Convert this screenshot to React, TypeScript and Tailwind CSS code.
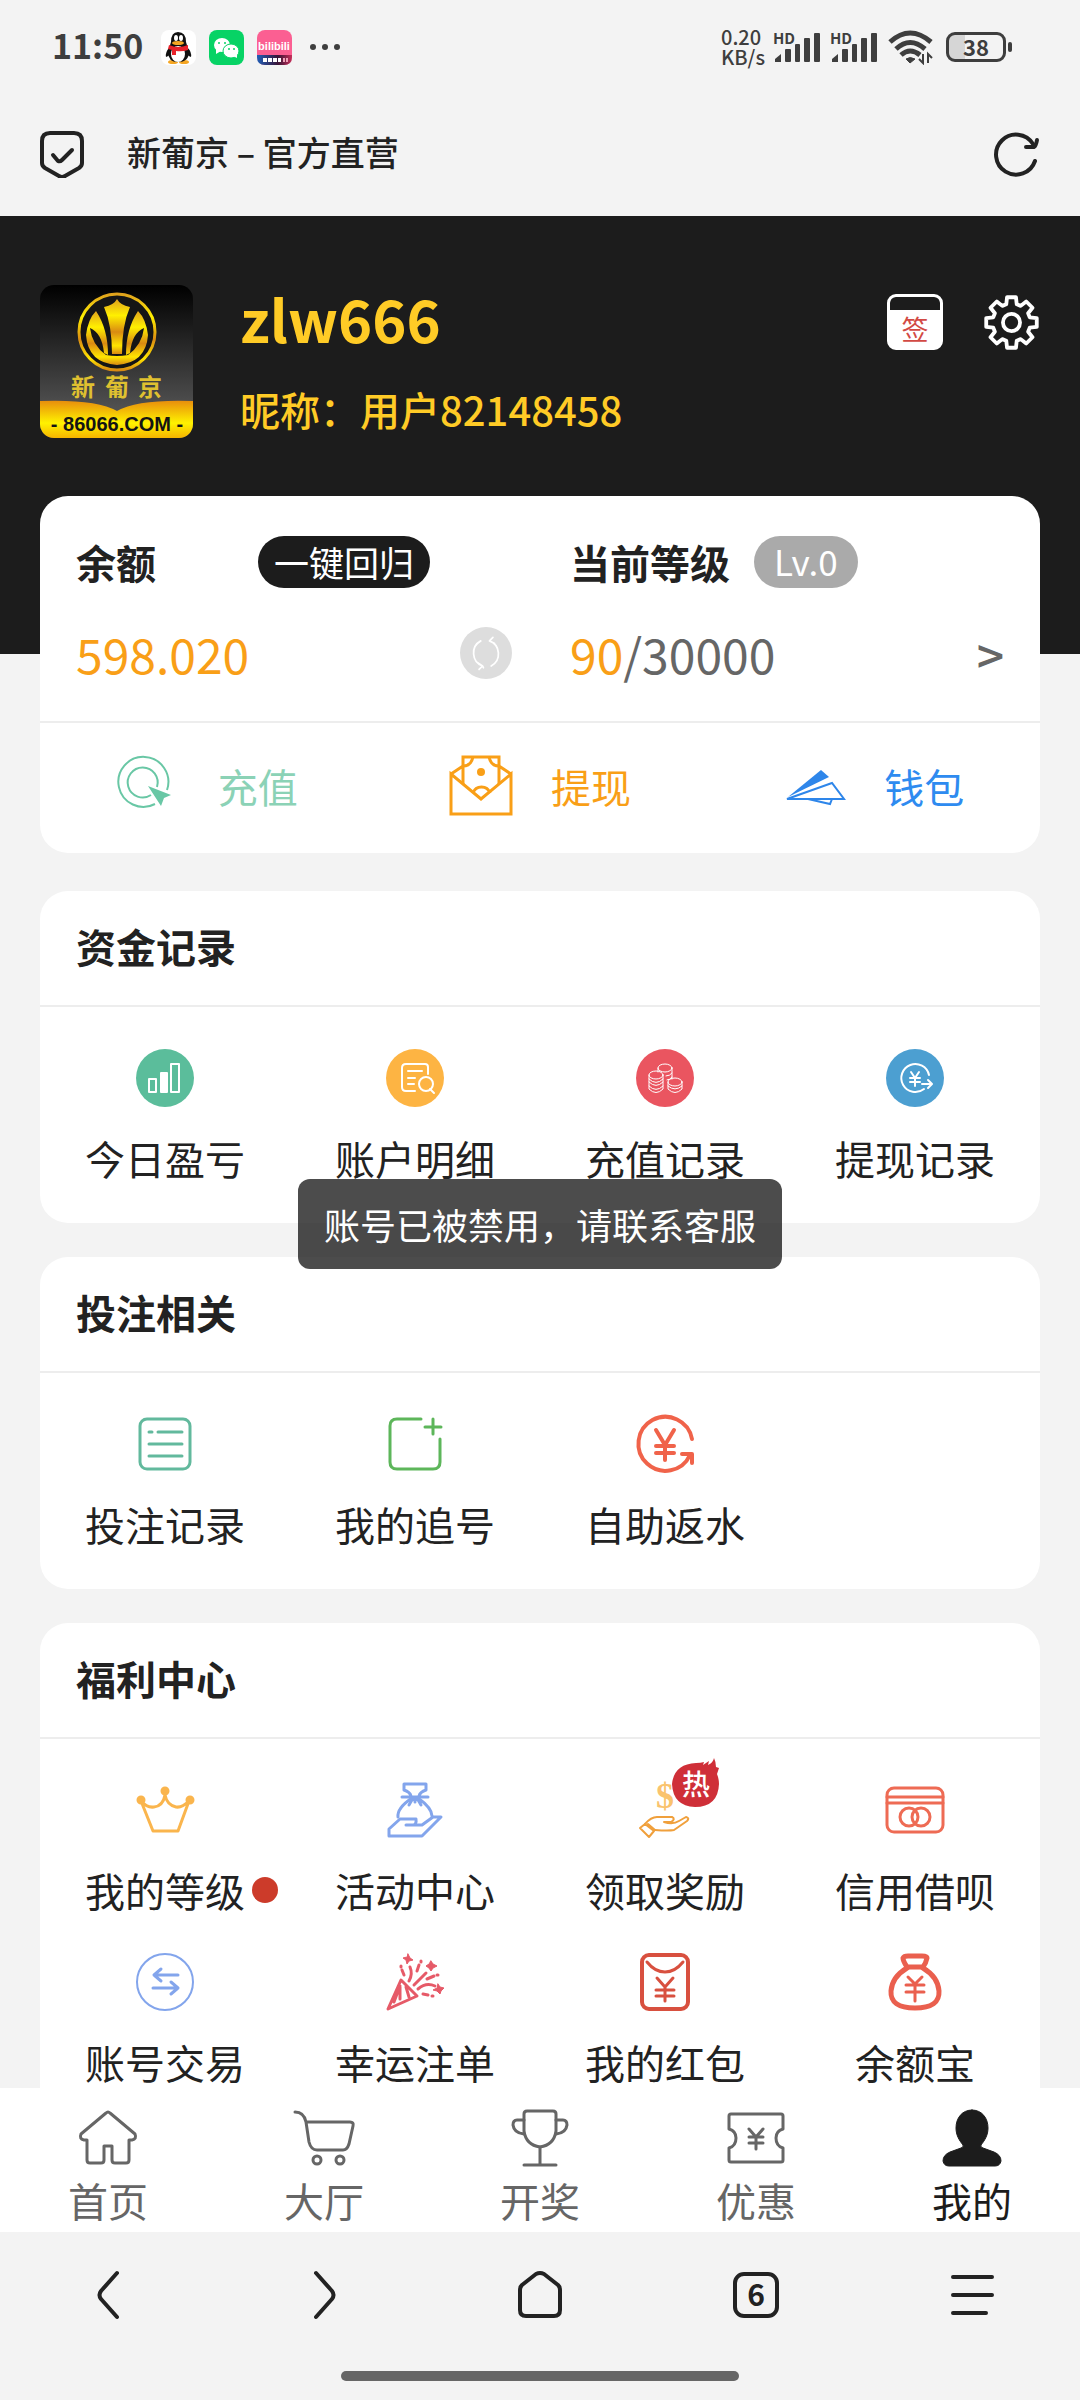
import type { ReactNode } from "react";

interface IconProps {
  children: ReactNode;
  color?: string;
  width?: number;
  className?: string;
}

interface MenuItem {
  label: string;
  icon: ReactNode;
  dot?: boolean;
  hot?: boolean;
}

interface MenuSection {
  title: string;
  items: MenuItem[];
}

// Every icon is drawn around (0, 0) on a 60 unit canvas
const Icon = ({ children, color = "#666666", width = 3, className = "size-[60px]" }: IconProps) => (
  <svg
    viewBox="-30 -30 60 60"
    className={`shrink-0 overflow-visible ${className}`}
    fill="none"
    stroke={color}
    strokeWidth={width}
    strokeLinecap="round"
    strokeLinejoin="round"
    aria-hidden="true"
  >
    {children}
  </svg>
);

const gearPoints = Array.from({ length: 8 })
  .flatMap((_, i) => {
    const corners = [
      [20, -16],
      [27, -10],
      [27, 10],
      [20, 16],
    ];
    return corners.map(([r, deg]) => {
      const a = ((i * 45 + deg) * Math.PI) / 180;
      return `${(r * Math.cos(a)).toFixed(1)},${(r * Math.sin(a)).toFixed(1)}`;
    });
  })
  .join(" ");

const sections: MenuSection[] = [
  {
    title: "资金记录",
    items: [
      {
        label: "今日盈亏",
        icon: (
          <Icon color="#ffffff" width={2}>
            <circle r="29" fill="#5bbd9b" stroke="none" />
            <rect x="-16" y="1" width="7" height="13" />
            <rect x="-4" y="-5" width="6" height="19" fill="#ffffff" />
            <rect x="6" y="-14" width="8" height="28" />
          </Icon>
        ),
      },
      {
        label: "账户明细",
        icon: (
          <Icon color="#ffffff" width={2}>
            <circle r="29" fill="#fdb443" stroke="none" />
            <path d="M13 -4 V-11 Q13 -14 10 -14 H-9 Q-13 -14 -13 -10 V9 Q-13 13 -9 13 H0" />
            <path d="M-7 -7 H7 M-7 0 H0 M-7 6 H-1" />
            <circle cx="11" cy="6" r="7" />
            <path d="M15 11 L19 15" />
          </Icon>
        ),
      },
      {
        label: "充值记录",
        icon: (
          <Icon color="#ffffff" width={1}>
            <circle r="29" fill="#ea5560" stroke="none" />
            <ellipse cx="0" cy="-10" rx="7" ry="4" />
            <path d="M-7 -10 V-6 M7 -10 V1 M1 -2 Q5 -2 7 -5 M2 2 Q5 2 7 -1" />
            <ellipse cx="-9" cy="-3" rx="7" ry="4" />
            <path d="M-16 -3 V11 Q-9 18 -2 11 V-3 M-16 1 Q-9 8 -2 1 M-16 4 Q-9 11 -2 4 M-16 8 Q-9 15 -2 8" />
            <ellipse cx="10" cy="4" rx="7" ry="4" />
            <path d="M3 4 V11 Q10 18 17 11 V4 M3 8 Q10 14 17 8" />
          </Icon>
        ),
      },
      {
        label: "提现记录",
        icon: (
          <Icon color="#ffffff" width={2}>
            <circle r="29" fill="#4c9fd1" stroke="none" />
            <path d="M14 -3 A14 14 0 1 0 9 11" />
            <path d="M-4 -6 L0 0 L4 -6 M-5 0 H5 M-5 4 H5 M0 0 V8" />
            <path d="M7 6 H16 M13 2 L17 6 L13 10" />
          </Icon>
        ),
      },
    ],
  },
  {
    title: "投注相关",
    items: [
      {
        label: "投注记录",
        icon: (
          <Icon color="#62b99d">
            <rect x="-25" y="-25" width="50" height="50" rx="7" />
            <path d="M-16 -12 H-13 M-7 -12 H17 M-16 0 H17 M-16 12 H17" />
          </Icon>
        ),
      },
      {
        label: "我的追号",
        icon: (
          <Icon color="#5db65a">
            <path d="M6 -25 H-18 Q-25 -25 -25 -18 V18 Q-25 25 -18 25 H18 Q25 25 25 18 V-5" />
            <path d="M18 -25 V-10 M10 -17 H26" />
          </Icon>
        ),
      },
      {
        label: "自助返水",
        icon: (
          <Icon color="#f0634a" width={4}>
            <path d="M27 -5 A27 27 0 1 0 25 11 M17 10 H27 V19" />
            <path d="M-9 -14 L0 1 L9 -14 M-9 2 H9 M-9 9 H9 M0 1 V16" />
          </Icon>
        ),
      },
    ],
  },
  {
    title: "福利中心",
    items: [
      {
        label: "我的等级",
        dot: true,
        icon: (
          <Icon color="#fab54d">
            <path d="M-24 -9 L-12 21 H13 L24 -9 Q17 -2 11 -3 Q2 -5 0 -15 Q-2 -4 -11 -3 Q-18 -2 -24 -9 Z" />
            <g fill="#fab54d">
              <circle cx="-24" cy="-10" r="3" />
              <circle cx="0" cy="-19" r="3" />
              <circle cx="25" cy="-10" r="3" />
            </g>
          </Icon>
        ),
      },
      {
        label: "活动中心",
        icon: (
          <Icon color="#83a5ec">
            <path d="M-4 -14 Q-5 -18 -11 -20 V-26 H11 V-20 Q5 -18 4 -14 M-13 -13 H13" />
            <path d="M-3 -12 Q-18 -2 -17 7 M3 -12 Q17 -2 17 6 M-2 -12 L-6 -5 M2 -12 L6 -5 M0 -12 V-8" />
            <path d="M-26 26 V19 L-15 9 H1 Q2 15 -3 15 H-9 H7 L18 7 H26 L7 26 Z" />
          </Icon>
        ),
      },
      {
        label: "领取奖励",
        hot: true,
        icon: (
          <Icon color="#f0a03c" width={2}>
            <text
              x="0"
              y="-2"
              fontSize="36"
              fontWeight="bold"
              textAnchor="middle"
              fill="#fac36e"
              stroke="none"
              className="font-['Liberation_Serif',serif]"
            >
              $
            </text>
            <path d="M-20 14 Q-14 7 -8 7 H7 Q11 9 6 12 L-1 12 Q8 15 14 11 L21 7 Q25 8 22 11 L9 20 Q4 21 -10 20" />
            <path d="M-20 14 L-25 18 L-16 27 L-11 21 Z M-17 14 L-10 20" />
          </Icon>
        ),
      },
      {
        label: "信用借呗",
        icon: (
          <Icon color="#ee6b54">
            <rect x="-28" y="-22" width="56" height="44" rx="7" />
            <path d="M-28 -13 H28 M-28 -7 H28" />
            <circle cx="-6" cy="7" r="9" />
            <circle cx="6" cy="7" r="9" />
          </Icon>
        ),
      },
      {
        label: "账号交易",
        icon: (
          <Icon color="#83a5ec">
            <circle r="28" strokeWidth="2" />
            <path d="M13 -7 H-11 M-4 -13 L-11 -7 L-4 -1 M-12 6 H13 M6 0 L13 6 L6 12" />
          </Icon>
        ),
      },
      {
        label: "幸运注单",
        icon: (
          <Icon color="#e65a68">
            <path d="M-27 27 L-14 -2 L2 14 Z M-15 5 V17 M-9 5 L-6 15 M-21 20 L-15 4" />
            <path d="M-6 -1 Q-2 -8 -5 -15 M-1 3 L11 -9 M3 7 Q11 0 20 4 M-11 -7 L-13 -12 M2 -11 L4 -17 M12 -3 L19 -6 M8 12 L13 13" />
            <path d="M-14 -15 V-16 M6 -20 V-21 M22 -7 H23 M17 14 H18" />
            <g fill="#e65a68" strokeWidth="1">
              <path d="M-7 -28 L-5 -24 L-2 -22 L-6 -21 L-8 -18 L-9 -22 L-12 -24 L-8 -25 Z" />
              <path d="M16 -21 L18 -18 L22 -16 L18 -14 L16 -11 L14 -14 L11 -16 L14 -18 Z" />
              <path d="M23 2 L25 5 L29 6 L26 9 L25 12 L22 9 L18 8 L22 6 Z" />
            </g>
          </Icon>
        ),
      },
      {
        label: "我的红包",
        icon: (
          <Icon color="#d8503f" width={4}>
            <rect x="-23" y="-27" width="46" height="54" rx="7" />
            <path d="M-18 -20 Q-10 -10 0 -10 Q10 -10 18 -20" strokeWidth="3" />
            <path d="M-8 -4 L0 5 L8 -4 M-9 8 H9 M-9 14 H9 M0 6 V19" strokeWidth="3" />
          </Icon>
        ),
      },
      {
        label: "余额宝",
        icon: (
          <Icon color="#ea5f4e" width={5}>
            <path d="M-8 -15 Q-12 -21 -12 -24 Q-11 -26 -7 -26 H7 Q12 -26 12 -24 Q11 -19 8 -15 Z" />
            <path d="M-8 -14 Q-23 -5 -24 9 Q-25 26 0 26 Q25 26 24 9 Q23 -5 8 -14" />
            <path d="M-7 -5 L0 2 L7 -5 M-9 3 H9 M-9 10 H9 M0 3 V19" strokeWidth="3" />
          </Icon>
        ),
      },
    ],
  },
];

const tabs = [
  {
    label: "首页",
    icon: (
      <Icon>
        <path d="M-2 -25 Q0 -27 2 -25 L27 -4 Q29 1 24 2 H21 V22 Q21 25 18 25 H7 Q4 25 4 22 V8 H-4 V22 Q-4 25 -7 25 H-18 Q-21 25 -21 22 V2 H-24 Q-29 1 -27 -4 Z" />
      </Icon>
    ),
  },
  {
    label: "大厅",
    icon: (
      <Icon>
        <path d="M-29 -26 Q-20 -26 -18 -16 H26 Q30 -16 29 -12 L25 6 Q23 12 19 12 H-7 Q-13 12 -15 4 L-18 -16" />
        <circle cx="-7" cy="22" r="4" />
        <circle cx="16" cy="22" r="4" />
      </Icon>
    ),
  },
  {
    label: "开奖",
    icon: (
      <Icon>
        <path d="M-13 -27 H13 Q16 -27 16 -24 V-7 Q14 7 0 9 Q-14 7 -16 -7 V-24 Q-16 -27 -13 -27 Z" />
        <path d="M-16 -18 H-23 Q-27 -18 -27 -13 Q-26 -5 -16 -4 M16 -18 H23 Q27 -18 27 -13 Q26 -5 16 -4 M0 9 V27 M-16 27 H16" />
      </Icon>
    ),
  },
  {
    label: "优惠",
    icon: (
      <Icon>
        <path d="M-25 -24 H25 Q27 -24 27 -22 V-9 Q20 -7 20 0 Q20 8 27 10 V22 Q27 24 25 24 H-25 Q-27 24 -27 22 V10 Q-20 8 -20 0 Q-20 -7 -27 -9 V-22 Q-27 -24 -25 -24 Z" />
        <path d="M-7 -9 L0 -1 L7 -9 M-7 -1 H7 M-7 5 H7 M0 -1 V11" />
      </Icon>
    ),
  },
  {
    label: "我的",
    active: true,
    icon: (
      <Icon color="#1c1c1c" width={1}>
        <path
          fill="#1c1c1c"
          d="M0 -28 C10 -28 16 -20 16 -10 C16 -3 13 2 9 7 Q8 9 11 10 L22 14 Q29 17 29 23 Q28 28 23 28 H-23 Q-28 28 -29 23 Q-29 17 -22 14 L-11 10 Q-8 9 -9 7 C-13 2 -16 -3 -16 -10 C-16 -20 -10 -28 0 -28 Z"
        />
      </Icon>
    ),
  },
];

const Signal = () => (
  <svg viewBox="0 0 48 32" className="h-8 w-12 overflow-visible" fill="#3e3e3e" aria-hidden="true">
    <text x="0" y="13" fontSize="15" fontWeight="bold" className="font-['Noto_Sans_CJK_SC',sans-serif]">
      HD
    </text>
    <path d="M2 28 L8 23 V31 H2 Z" />
    <rect x="12" y="18" width="6" height="13" rx="1" />
    <rect x="22" y="13" width="5" height="18" rx="1" />
    <rect x="31" y="7" width="6" height="24" rx="1" />
    <rect x="41" y="2" width="6" height="29" rx="1" />
  </svg>
);

const StatusBar = () => (
  <div className="flex h-[94px] items-center pl-[52px] pr-[68px] text-[#3e3e3e]">
    <span className="pb-1 text-[34px] font-bold leading-[40px]">11:50</span>
    <div className="ml-[18px] flex items-center gap-[13px]">
      {/* QQ */}
      <svg viewBox="0 0 35 35" className="size-[35px]" aria-hidden="true">
        <rect width="35" height="35" rx="8" fill="#ffffff" />
        <ellipse cx="12" cy="32" rx="5" ry="2" fill="#f5a623" />
        <ellipse cx="23" cy="32" rx="5" ry="2" fill="#f5a623" />
        <path d="M9 17 Q4 22 5 27 Q7 27 9 24 M26 17 Q31 22 30 27 Q28 27 26 24" fill="#111111" />
        <path d="M17 2 Q25 2 25 12 L28 22 Q28 32 17 32 Q7 32 7 22 L10 12 Q10 2 17 2" fill="#111111" />
        <ellipse cx="17" cy="24" rx="7" ry="8" fill="#ffffff" />
        <path d="M8 15 Q17 19 27 15 L27 20 Q21 22 15 21 V25 H11 V20 L7 19 Z" fill="#e8222a" />
        <ellipse cx="15" cy="8" rx="2" ry="3" fill="#ffffff" />
        <ellipse cx="20" cy="8" rx="2" ry="3" fill="#ffffff" />
        <ellipse cx="17" cy="13" rx="6" ry="2" fill="#f5a623" />
      </svg>
      {/* WeChat */}
      <svg viewBox="0 0 35 35" className="size-[35px]" aria-hidden="true">
        <rect width="35" height="35" rx="8" fill="#07d365" />
        <ellipse cx="13" cy="15" rx="8" ry="7" fill="#ffffff" />
        <path d="M7 19 L7 24 L12 21 Z" fill="#ffffff" />
        <ellipse cx="22" cy="21" rx="8" ry="7" fill="#ffffff" stroke="#07d365" />
        <path d="M24 26 L28 28 L28 24 Z" fill="#ffffff" />
        <g fill="#07d365">
          <circle cx="10" cy="13" r="1" />
          <circle cx="16" cy="13" r="1" />
          <circle cx="20" cy="19" r="1" />
          <circle cx="25" cy="19" r="1" />
        </g>
      </svg>
      {/* bilibili */}
      <svg viewBox="0 0 35 35" className="size-[35px]" aria-hidden="true">
        <defs>
          <linearGradient id="bili">
            <stop offset="0" stopColor="#1f5fb8" />
            <stop offset="0.6" stopColor="#3a1436" />
            <stop offset="1" stopColor="#c6305a" />
          </linearGradient>
        </defs>
        <rect width="35" height="35" rx="8" fill="#fb5f92" />
        <path d="M0 25 H35 V27 Q35 35 27 35 H8 Q0 35 0 27 Z" fill="url(#bili)" />
        <text
          x="17"
          y="20"
          fontSize="11"
          fontWeight="bold"
          textAnchor="middle"
          fill="#ffffff"
          className="font-['Liberation_Sans',sans-serif]"
        >
          bilibili
        </text>
        <path d="M6 30 H24" stroke="#ffffff" strokeWidth="4" strokeDasharray="4 1" />
        <path d="M26 30 H31" stroke="#f0a0b8" strokeWidth="4" strokeDasharray="2 1" />
      </svg>
      <svg viewBox="0 0 34 8" className="ml-1 h-2 w-[34px]" fill="#3e3e3e" aria-hidden="true">
        <circle cx="4" cy="4" r="3" />
        <circle cx="16" cy="4" r="3" />
        <circle cx="28" cy="4" r="3" />
      </svg>
    </div>
    <div className="ml-auto flex items-center">
      <div className="w-[52px] text-[20px] font-medium leading-[20px]">
        <div>0.20</div>
        <div>KB/s</div>
      </div>
      <Signal />
      <div className="ml-[9px]">
        <Signal />
      </div>
      <svg
        viewBox="0 0 46 36"
        className="ml-[10px] h-9 w-[46px]"
        fill="none"
        stroke="#3e3e3e"
        strokeWidth="5"
        aria-hidden="true"
      >
        <path d="M2 13 Q22 -5 43 13 M8 20 Q22 7 37 20 M13 26 Q22 18 32 26" />
        <path d="M18 30 Q22 27 27 30 L22 34 Z" fill="#3e3e3e" strokeWidth="1" />
        <path d="M35 25 V34 L31 30 M40 34 V25 L44 29" strokeWidth="2" />
      </svg>
      <div className="ml-3 flex h-[30px] w-[60px] items-center justify-center rounded-[9px] border-[3px] border-[#3e3e3e] bg-linear-to-r from-[#d6d6d6] from-30% to-transparent to-30% pb-[2px] text-[22px] font-bold leading-none">
        38
      </div>
      <div className="ml-[2px] h-[10px] w-[4px] rounded-full bg-[#3e3e3e]" />
    </div>
  </div>
);

const TitleBar = () => (
  <div className="flex h-[122px] items-center px-10 pb-[3px]">
    <svg
      viewBox="0 0 44 48"
      className="h-12 w-11"
      fill="none"
      stroke="#222222"
      strokeWidth="4"
      strokeLinecap="round"
      strokeLinejoin="round"
      aria-hidden="true"
    >
      <path d="M10 3 H34 Q42 3 42 11 V33 Q42 36 39 38 L25 46 Q22 48 19 46 L5 38 Q2 36 2 33 V11 Q2 3 10 3 Z" />
      <path d="M13 25 L18 31 Q20 32 22 30 L32 20" />
    </svg>
    <h1 className="ml-[43px] pb-1 text-[34px] font-medium leading-[48px] text-[#222222]">新葡京 – 官方直营</h1>
    <button type="button" aria-label="刷新页面" className="ml-auto">
      <svg
        viewBox="0 0 46 46"
        className="size-[46px]"
        fill="none"
        stroke="#222222"
        strokeWidth="4"
        strokeLinecap="round"
        strokeLinejoin="round"
      >
        <path d="M41 30 A20 20 0 1 1 39 13" />
        <path d="M32 16 H40 Q42 15 43 9" />
      </svg>
    </button>
  </div>
);

const Logo = () => (
  <svg viewBox="0 0 153 153" className="size-[153px] shrink-0 rounded-[14px]" role="img" aria-label="新葡京">
    <defs>
      <linearGradient id="logo-bg" x1="0" y1="0" x2="0" y2="1">
        <stop offset="0" stopColor="#000000" />
        <stop offset="0.8" stopColor="#505050" />
      </linearGradient>
      <linearGradient id="logo-gold" x1="0" y1="0" x2="0" y2="1">
        <stop offset="0" stopColor="#e0a21c" />
        <stop offset="0.3" stopColor="#fff000" />
        <stop offset="0.6" stopColor="#d98a12" />
        <stop offset="0.85" stopColor="#ffe600" />
        <stop offset="1" stopColor="#d98a12" />
      </linearGradient>
      <linearGradient id="logo-band" x1="0" y1="0" x2="0" y2="1">
        <stop offset="0" stopColor="#e88e0c" />
        <stop offset="0.6" stopColor="#fff200" />
        <stop offset="1" stopColor="#f5b400" />
      </linearGradient>
    </defs>
    <rect width="153" height="153" fill="url(#logo-bg)" />
    <circle cx="77" cy="47" r="38" fill="#151515" stroke="url(#logo-gold)" strokeWidth="3" />
    <g fill="url(#logo-gold)">
      <path d="M77 14 Q80 20 90 22 Q82 40 82 69 H72 Q72 40 64 22 Q74 20 77 14 Z" />
      <path d="M56 26 Q68 44 68 70 L64 68 Q62 48 50 43 Q52 60 66 70 Q77 72 88 70 Q102 60 104 43 Q92 48 90 68 L86 70 Q86 44 98 26 Q106 34 108 50 Q106 78 77 80 Q48 78 46 50 Q48 34 56 26 Z" />
    </g>
    <text
      x="31 65 98"
      y="111"
      fontSize="24"
      fontWeight="bold"
      fill="#dfc030"
      className="font-['Noto_Sans_CJK_SC',sans-serif]"
    >
      新葡京
    </text>
    <path d="M0 116 Q56 114 77 126 Q98 114 153 116 V153 H0 Z" fill="url(#logo-band)" />
    <text
      x="77"
      y="146"
      fontSize="20"
      fontWeight="bold"
      textAnchor="middle"
      fill="#141414"
      className="font-['Liberation_Sans',sans-serif]"
    >
      - 86066.COM -
    </text>
  </svg>
);

const ProfileHeader = () => (
  <header className="flex bg-[#1c1c1c] px-10 pb-[216px] pt-[69px]">
    <Logo />
    <div className="ml-[47px] text-[#ffcb26]">
      <div className="text-[58px] font-bold leading-[66px]">zlw666</div>
      <div className="mt-[29px] text-[40px] font-medium leading-[58px]">昵称：用户82148458</div>
    </div>
    <div className="ml-auto flex items-start gap-10 pt-[9px]">
      <button type="button" aria-label="签到">
        <span className="block size-[56px] overflow-hidden rounded-[9px] border-[3px] border-white bg-white">
          <span className="block h-[13px] rounded-t-[5px] bg-[#1c1c1c]" />
          <span className="block text-center text-[27px] leading-[37px] text-[#d24a44]">签</span>
        </span>
      </button>
      <button type="button" aria-label="设置">
        <Icon color="#ffffff" width={4} className="size-[57px]">
          <polygon points={gearPoints} />
          <circle r="9" />
        </Icon>
      </button>
    </div>
  </header>
);

const BalanceCard = () => (
  <section className="rounded-[28px] bg-white">
    <div className="grid grid-cols-2 px-9 pb-[38px] pt-10">
      <div className="pr-7">
        <div className="flex h-[52px] items-center">
          <h2 className="text-[40px] font-bold leading-[52px]">余额</h2>
          <button
            type="button"
            className="ml-[102px] h-[52px] rounded-full bg-[#1c1c1c] px-4 text-[35px] leading-[50px] text-white"
          >
            一键回归
          </button>
        </div>
        <div className="mt-[35px] flex h-[60px] items-center justify-between">
          <span className="text-[48px] leading-[60px] text-[#f99f17]">598.020</span>
          <button
            type="button"
            aria-label="刷新余额"
            className="flex size-[52px] items-center justify-center rounded-full bg-[#dddddd]"
          >
            <Icon color="#ffffff" width={2} className="size-[52px]">
              <path d="M-6 -14 A16 16 0 0 0 -4 15 M-3 17 L-4 15 L-10 11 M-4 15 L-8 19" />
              <path d="M6 15 A16 16 0 0 0 4 -14 L10 -11 M4 -14 L8 -18" />
            </Icon>
          </button>
        </div>
      </div>
      <div className="pl-[30px]">
        <div className="flex h-[52px] items-center">
          <h2 className="text-[40px] font-bold leading-[52px]">当前等级</h2>
          <span className="ml-6 h-[52px] rounded-full bg-[#aaaaaa] px-5 text-[35px] leading-[50px] text-white">
            Lv.0
          </span>
        </div>
        <a href="#level" className="mt-[35px] flex h-[60px] items-center justify-between text-[48px] leading-[60px]">
          <span className="text-[#666666]">
            <span className="text-[#f99f17]">90</span>/30000
          </span>
          <span className="font-medium text-[#666666]">&gt;</span>
        </a>
      </div>
    </div>
    <div className="grid h-[132px] grid-cols-3 border-t-2 border-[#ededed] pb-1 text-[40px] leading-[60px]">
      <a href="#recharge" className="flex items-center justify-center gap-[38px] text-[#8bd2b6]">
        <svg viewBox="0 0 64 64" className="size-16" fill="none" stroke="#69c7a5" strokeWidth="2" aria-hidden="true">
          <path d="M51 36 A25 25 0 1 0 39 50" />
          <path d="M41 33 A15 15 0 1 0 35 41" />
          <path d="M32 32 L55 41 L48 44 L45 52 Z" fill="#69c7a5" stroke="none" />
        </svg>
        充值
      </a>
      <a href="#withdraw" className="flex items-center justify-center gap-[38px] text-[#f99f17]">
        <svg viewBox="0 0 64 64" className="size-16" fill="none" stroke="#f99f17" strokeWidth="3" aria-hidden="true">
          <path d="M2 20 V60 H62 V20 L32 45 Z" />
          <path d="M2 20 L14 12 M62 20 L50 12 M14 30 V3 H50 V30" />
          <path d="M14 12 Q22 12 24 3 M50 12 Q42 12 40 3 M24 39 A9 9 0 0 1 41 39" />
          <circle cx="32" cy="18" r="4" fill="#f99f17" stroke="none" />
        </svg>
        提现
      </a>
      <a href="#wallet" className="flex items-center justify-center gap-[38px] text-[#2e8bf0]">
        <svg viewBox="0 0 64 64" className="size-16" fill="none" stroke="#2e86ea" strokeWidth="2" aria-hidden="true">
          <path d="M39 16 L47 23 L6 43 Z" fill="#2e86ea" stroke="none" />
          <path d="M5 45 L50 29 L62 45 Z M26 45 L48 50 L50 45" />
        </svg>
        钱包
      </a>
    </div>
  </section>
);

const HotBadge = () => (
  <svg viewBox="0 0 48 50" className="absolute -top-[22px] left-[37px] h-[50px] w-12" aria-hidden="true">
    <path
      d="M24 5 Q29 5 32 4 L31 7 L37 3 L36 7 Q41 5 42 0 Q44 4 44 9 L47 10 L45 16 Q47 21 47 26 Q46 49 23 49 Q1 48 0 26 Q2 6 24 5 Z"
      fill="#cf2f38"
    />
    <text
      x="24"
      y="37"
      fontSize="28"
      fontWeight="500"
      textAnchor="middle"
      fill="#ffffff"
      className="font-['Noto_Sans_CJK_SC',sans-serif]"
    >
      热
    </text>
  </svg>
);

const SectionCard = ({ title, items }: MenuSection) => (
  <section className="rounded-[28px] bg-white">
    <h2 className="border-b-2 border-[#ededed] px-9 pb-[29px] pt-[25px] text-[40px] font-bold leading-[60px]">
      {title}
    </h2>
    <div className="grid grid-cols-4 gap-y-8 pb-[35px] pt-[41px]">
      {items.map((item) => (
        <a key={item.label} href={`#${item.label}`} className="flex flex-col items-center">
          <span className="relative">
            {item.icon}
            {item.hot && <HotBadge />}
          </span>
          <span className="relative mt-5 text-[40px] leading-[60px]">
            {item.label}
            {item.dot && <span className="absolute left-full top-[17px] ml-[7px] size-[26px] rounded-full bg-[#cc3b2a]" />}
          </span>
        </a>
      ))}
    </div>
  </section>
);

const TabBar = () => (
  <nav className="grid grid-cols-5 bg-white pb-1 pt-5">
    {tabs.map((tab) => (
      <a
        key={tab.label}
        href={`#${tab.label}`}
        className={`flex flex-col items-center gap-1 text-[40px] leading-[56px] ${
          tab.active ? "text-[#1c1c1c]" : "text-[#666666]"
        }`}
      >
        {tab.icon}
        {tab.label}
      </a>
    ))}
  </nav>
);

const BrowserBar = () => (
  <div>
    <div className="grid h-[126px] grid-cols-5 items-center justify-items-center">
      <button type="button" aria-label="后退">
        <Icon color="#222222" width={4}>
          <path d="M9 -22 L-7 -4 Q-10 0 -7 4 L9 22" />
        </Icon>
      </button>
      <button type="button" aria-label="前进">
        <Icon color="#222222" width={4}>
          <path d="M-8 -22 L8 -4 Q11 0 8 4 L-8 22" />
        </Icon>
      </button>
      <button type="button" aria-label="主页">
        <Icon color="#222222" width={4}>
          <path d="M-4 -21 Q0 -23 4 -21 L18 -10 Q20 -8 20 -5 V15 Q20 21 14 21 H-14 Q-20 21 -20 15 V-5 Q-20 -8 -18 -10 Z" />
        </Icon>
      </button>
      <button
        type="button"
        aria-label="标签页"
        className="flex size-[46px] items-center justify-center rounded-[11px] border-4 border-[#222222] pb-1 text-[30px] font-bold leading-none text-[#222222]"
      >
        6
      </button>
      <button type="button" aria-label="菜单">
        <Icon color="#222222" width={4}>
          <path d="M-19 -18 H20 M-19 0 H20 M-19 18 H14" />
        </Icon>
      </button>
    </div>
    <div className="mx-auto mb-[19px] mt-[13px] h-[10px] w-[398px] rounded-full bg-[#666666]" />
  </div>
);

const App = () => (
  <div className="flex h-screen flex-col bg-[#f3f3f3] font-['Noto_Sans_CJK_SC','Noto_Sans',sans-serif] text-[#222222]">
    <StatusBar />
    <TitleBar />
    <div className="relative min-h-0 flex-1">
      <main className="h-full overflow-y-auto [scrollbar-width:none]">
        <ProfileHeader />
        <div className="-mt-[158px] px-10">
          <BalanceCard />
          <div className="mt-[38px] flex flex-col gap-[34px]">
            {sections.map((section) => (
              <SectionCard key={section.title} {...section} />
            ))}
          </div>
        </div>
      </main>
      <div className="pointer-events-none absolute inset-0 flex items-center justify-center pt-36">
        <div role="alert" className="rounded-xl bg-black/70 px-[26px] py-[18px] text-[36px] leading-[54px] text-white">
          账号已被禁用，请联系客服
        </div>
      </div>
    </div>
    <TabBar />
    <BrowserBar />
  </div>
);

export default App;
